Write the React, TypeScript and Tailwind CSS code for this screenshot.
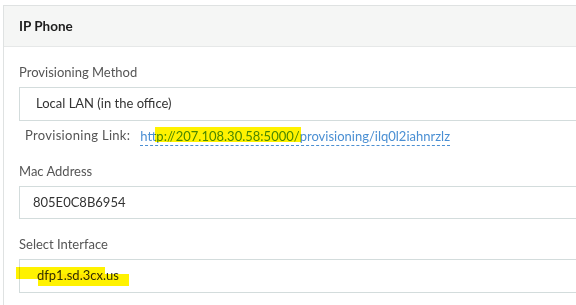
import React from 'react';

const Label = ({ children }: { children: React.ReactNode }) => (
  <div className="h-5 leading-5 text-[13px] text-[#555]">{children}</div>
);

const App = () => {
  return (
    <div className="w-[576px] h-[305px] overflow-hidden bg-white font-['Lato','Open_Sans',sans-serif]">
      <div className="ml-[3px] mt-[5px] w-[700px] h-[400px] border border-[#dfe2e2]">
        {/* panel header */}
        <div className="h-[41px] bg-[#f5f6f5] border-b border-[#e6e8e8] pl-[15px] flex items-center">
          <span className="text-[13.5px] font-bold text-[#1d1d1d]">IP Phone</span>
        </div>

        <div className="pl-[15px] pt-[15px]">
          <Label>Provisioning Method</Label>
          <div className="mt-[5px] h-[34px] border border-[#d3dcdc] pl-[16px] flex items-center text-[13px] text-[#333]">
            Local LAN (in the office)
          </div>

          <div className="mt-[5px] h-5 pl-[6px] flex items-center text-[13px]">
            <span className="text-[#555] tracking-[0.3px]">Provisioning Link:</span>
            <span className="ml-[10px] text-[#4a8fd3] border-b border-dashed border-[#4a8fd3] leading-[18px]">
              ht
              <span className="relative">
                tp://207.108.30.58:5000/
                {/* marker highlight */}
                <span className="absolute -left-[1px] -right-[1px] top-[-1px] h-[15px] bg-[#fff200] mix-blend-multiply" />
              </span>
              provisioning/ilq0l2iahnrzlz
            </span>
          </div>

          <div className="mt-[15px]">
            <Label>Mac Address</Label>
          </div>
          <div className="mt-[5px] h-[33px] border border-[#d3dcdc] pl-[13px] flex items-center text-[13px] text-[#333]">
            805E0C8B6954
          </div>

          <div className="mt-[15px]">
            <Label>Select Interface</Label>
          </div>
          <div className="relative mt-[5px] h-[34px] border border-[#d3dcdc] pl-[17px] flex items-center text-[13px] text-[#333]">
            dfp1.sd.3cx.us
            <span className="absolute left-[-4px] top-[7px] w-[89px] h-[12px] bg-[#fff200] mix-blend-multiply" />
            <span className="absolute left-[18px] top-[14px] w-[91px] h-[12px] bg-[#fff200] mix-blend-multiply" />
          </div>
        </div>
      </div>
    </div>
  );
};

export default App;
